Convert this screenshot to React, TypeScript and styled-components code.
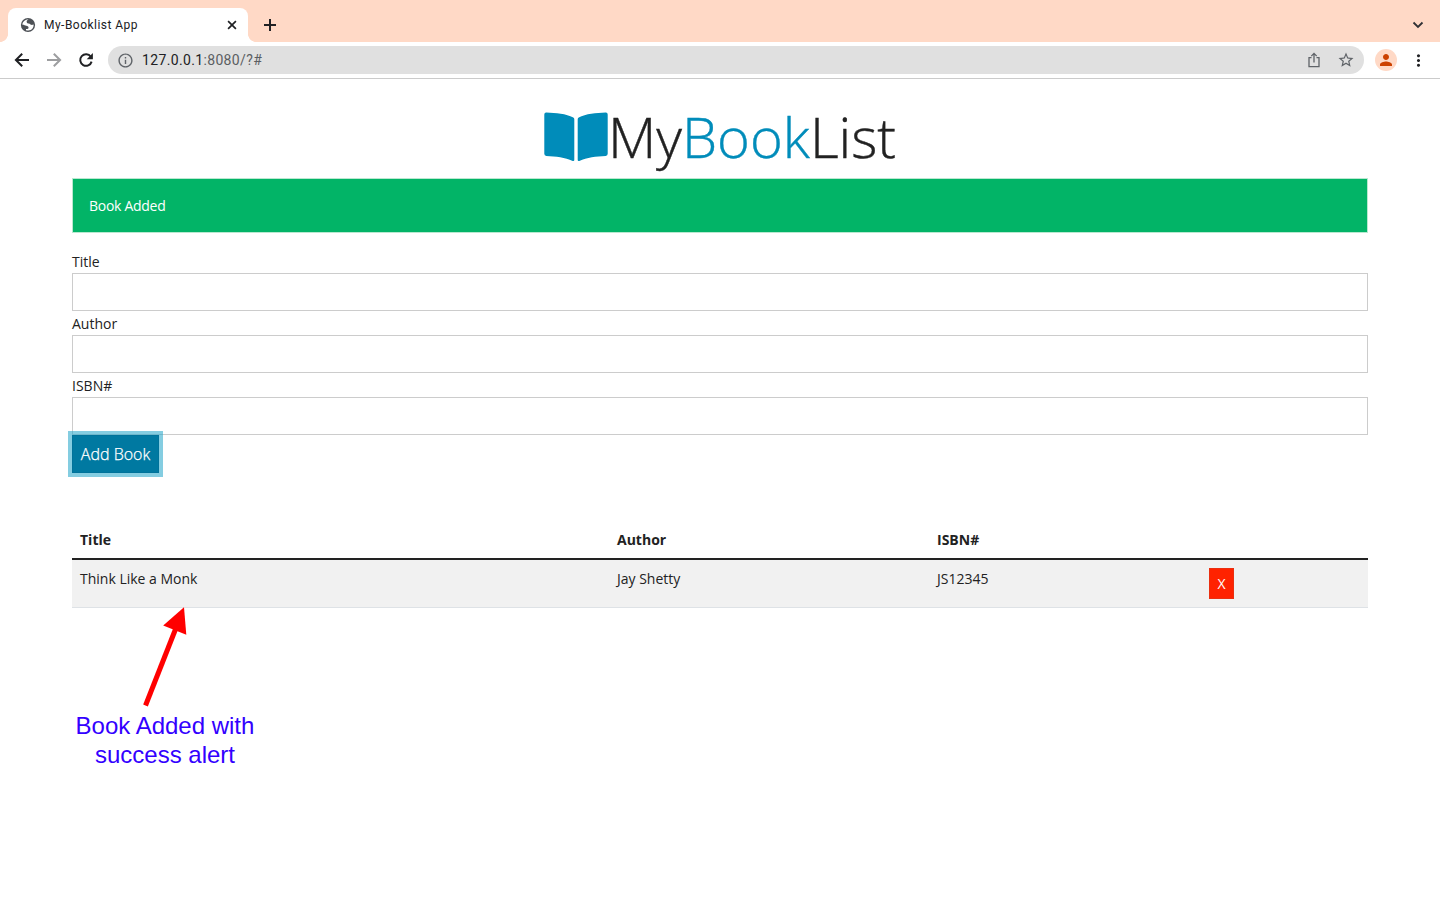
import React from "react";
import styled, { createGlobalStyle } from "styled-components";
import {
  MdOutlineInfo,
  MdStarBorder,
  MdPerson,
  MdMoreVert,
} from "react-icons/md";

const GlobalStyle = createGlobalStyle`
  *, *::before, *::after { box-sizing: border-box; }
  body {
    margin: 0;
    background: #fff;
    color: #222;
    font: 400 14px/21px "Open Sans", sans-serif;
    overflow: hidden;
  }
`;

const Window = styled.div`
  height: 900px;
  display: flex;
  flex-direction: column;
`;

const TabStrip = styled.div`
  height: 42px;
  padding: 8px 16px 0 8px;
  display: flex;
  background: #ffd9c6;
  color: #202124;
  font-family: Roboto, sans-serif;
`;

const Tab = styled.div`
  position: relative;
  width: 240px;
  height: 34px;
  padding: 0 9px 0 12px;
  display: flex;
  align-items: center;
  border-radius: 8px 8px 0 0;
  background: #fff;

  &::before,
  &::after {
    content: "";
    position: absolute;
    bottom: 0;
    width: 8px;
    height: 8px;
  }
  &::before {
    left: -8px;
    background: radial-gradient(circle at 0 0, transparent 7.6px, #fff 8.2px);
  }
  &::after {
    right: -8px;
    background: radial-gradient(circle at 100% 0, transparent 7.6px, #fff 8.2px);
  }
`;

const TabTitle = styled.span`
  flex: 1;
  margin-left: 8px;
  font-size: 12px;
  letter-spacing: 0.47px;
`;

const StripIcon = styled.span<{ $gap?: string }>`
  display: flex;
  align-items: center;
  height: 34px;
  margin-left: ${(p) => p.$gap ?? "0"};
`;

const Toolbar = styled.div`
  height: 37px;
  padding: 0 12px 0 12px;
  display: flex;
  align-items: center;
  border-bottom: 1px solid #cbcbcb;
  background: #fff;
  color: #202124;
`;

const NavButton = styled.span<{ $disabled?: boolean }>`
  width: 32px;
  display: flex;
  color: ${(p) => (p.$disabled ? "#9d9ea0" : "#202124")};
`;

const AddressBar = styled.div`
  width: 1256px;
  height: 28px;
  padding: 0 9px;
  display: flex;
  align-items: center;
  border-radius: 14px;
  background: #e0e0e0;
  color: #5f6368;
`;

const Url = styled.span`
  flex: 1;
  margin-left: 8px;
  font: 400 14px/20px Roboto, sans-serif;
  letter-spacing: 0.35px;
  color: #5b5e62;

  b {
    font-weight: 400;
    color: #202124;
  }
`;

const AddressIcon = styled.span`
  display: flex;
  margin-left: 15px;
`;

const Avatar = styled.span`
  width: 22px;
  height: 22px;
  margin: 0 12px 0 11px;
  display: flex;
  align-items: center;
  justify-content: center;
  border-radius: 50%;
  background: #ffd9c6;
  color: #cc4100;
`;

const Page = styled.main`
  position: relative;
  flex: 1;
  padding: 24px 72px 0;
`;

const Brand = styled.h1`
  height: 67px;
  margin: 0 0 8px;
  display: flex;
  justify-content: center;
  font-size: 56px;
  font-weight: 300;
  line-height: 67px;
  -webkit-text-stroke: 0.4px currentColor;

  svg {
    flex: none;
    margin: 8px 0 0;
    color: #008cba;
  }
`;

const Accent = styled.span`
  color: #008cba;
`;

const Alert = styled.div`
  height: 55px;
  padding: 16px;
  margin-bottom: 16px;
  border: 1px solid #b9e8d0;
  background: #02b467;
  color: #fff;
  letter-spacing: -0.28px;
`;

const Field = styled.label`
  display: block;
`;

const FieldName = styled.span`
  display: block;
  height: 24px;
  padding-top: 2px;
  line-height: 22px;
`;

const Input = styled.input`
  display: block;
  width: 100%;
  height: 38px;
  padding: 8px 12px;
  border: 1px solid #ccc;
  border-radius: 0;
  background: #fff;
`;

const SubmitButton = styled.button`
  position: relative;
  width: 87px;
  height: 38px;
  padding: 0;
  display: block;
  border: 1px solid #00729a;
  background: #0079a1;
  color: #fff;
  font: 300 16px/24px "Open Sans", sans-serif;
  -webkit-text-stroke: 0.25px currentColor;
  box-shadow: 0 0 0 4px rgba(38, 167, 202, 0.57);
`;

const Table = styled.table`
  width: 100%;
  margin-top: 48px;
  border-collapse: separate;
  border-spacing: 0;
  table-layout: fixed;
`;

const Column = styled.col<{ $width: number }>`
  width: ${(p) => p.$width}px;
`;

const HeadCell = styled.th`
  height: 39px;
  padding: 8px;
  border-bottom: 2px solid #222;
  text-align: left;
  font-weight: 700;
`;

const Cell = styled.td`
  height: 48px;
  padding: 8px;
  border-bottom: 1px solid #dee2e6;
  background: #f1f1f1;
  vertical-align: top;
`;

const DeleteButton = styled.button`
  display: block;
  width: 25px;
  height: 31px;
  padding: 0;
  border: 1px solid #ea2f10;
  background: #ff2200;
  color: #fff;
  font: 400 14px/21px "Open Sans", sans-serif;
`;

const Note = styled.div`
  position: absolute;
  left: 65px;
  top: 528px;
  width: 200px;
  color: #3300ff;
  font: 400 24px/29px "Liberation Sans", sans-serif;
  text-align: center;

  svg {
    display: block;
  }
`;

const NoteText = styled.div`
  margin-top: 4px;
`;

const books = [{ title: "Think Like a Monk", author: "Jay Shetty", isbn: "JS12345" }];

const LineIcon = ({ size, d, width = 2 }: { size: number; d: string; width?: number }) => (
  <svg
    width={size}
    height={size}
    viewBox={`0 0 ${size} ${size}`}
    fill="none"
    stroke="currentColor"
    strokeWidth={width}
  >
    <path d={d} />
  </svg>
);

const ReloadIcon = () => (
  <svg width="20" height="20" viewBox="0 0 20 20">
    <path d="M14.800 6.700A5.800 5.800 0 1 0 15.600 11.600" fill="none" stroke="currentColor" strokeWidth="2" />
    <path d="M16.900 3v6.200h-6.200Z" fill="currentColor" />
  </svg>
);

const GlobeIcon = () => (
  <svg width="16" height="16" viewBox="0 0 16 16">
    <circle cx="8" cy="8" r="7.100" fill="#4d5156" />
    <path
      d="M8.600 2.600C7.100 3 6.500 3.900 6.700 4.900c.2 1 1.100 1.500 2.200 1.700 1 .2 1.300.9 2.100 1.200.8.200 1.700 0 2.600-.2.300 3.100-2 5.900-5.200 6-.9 0-1.700-.1-2.400-.4V12c1.400.2 2.300-.2 2.500-1.100.3-1.300-.8-2-2.200-2.200-1.400-.2-2-.9-3.900-.9C2.300 5.100 4.900 2.400 8.600 2.600Z"
      fill="#fff"
    />
  </svg>
);

const BookIcon = () => (
  <svg width="64" height="52" viewBox="0 0 64 52" fill="currentColor">
    <path d="M2.300 1.500C12 1.800 22 2.800 29.300 6.500Q30.300 7 30.300 8.200V48.800Q30.300 50.500 28.700 49.900C21 46.200 12 45.500 2.300 44.900Q.3 44.700.3 42.700V3.500Q.3 1.400 2.300 1.500Z" />
    <path d="M61.700 1.500C52 1.800 42 2.800 34.700 6.500Q33.700 7 33.700 8.200V48.800Q33.700 50.500 35.300 49.900C43 46.200 52 45.500 61.700 44.900Q63.700 44.700 63.700 42.700V3.500Q63.700 1.400 61.700 1.500Z" />
  </svg>
);

export default function App() {
  return (
    <Window>
      <GlobalStyle />
      <TabStrip>
        <Tab>
          <GlobeIcon />
          <TabTitle>My-Booklist App</TabTitle>
          <LineIcon size={14} d="M3.100 3.100l7.800 7.800M10.900 3.100l-7.800 7.800" width={1.700} />
        </Tab>
        <StripIcon $gap="12px">
          <LineIcon size={20} d="M10 4v12M4 10h12" />
        </StripIcon>
        <StripIcon $gap="auto">
          <svg width="12" height="8" viewBox="0 0 12 8" fill="none" stroke="#303134" strokeWidth="1.8">
            <path d="M1.500 1.500 6 6l4.500-4.500" />
          </svg>
        </StripIcon>
      </TabStrip>
      <Toolbar>
        <NavButton><LineIcon size={20} d="M17 10H4.500M10.200 3.700 3.900 10l6.300 6.300" /></NavButton>
        <NavButton $disabled><LineIcon size={20} d="M3 10h12.500M9.800 3.700l6.300 6.300-6.300 6.300" /></NavButton>
        <NavButton><ReloadIcon /></NavButton>
        <AddressBar>
          <MdOutlineInfo size={17} />
          <Url><b>127.0.0.1</b>:8080/?#</Url>
          <AddressIcon>
            <svg width="16" height="16" viewBox="0 0 16 16" fill="none" stroke="currentColor" strokeWidth="1.300">
              <path d="M5.500 5.700H3v8.900h10V5.700h-2.500M8 10.500V1.500M5.300 4.100 8 1.400l2.700 2.700" />
            </svg>
          </AddressIcon>
          <AddressIcon><MdStarBorder size={18} /></AddressIcon>
        </AddressBar>
        <Avatar><MdPerson size={18} /></Avatar>
        <MdMoreVert size={19} />
      </Toolbar>
      <Page>
        <Brand>
          <BookIcon />
          <span>My<Accent>Book</Accent>List</span>
        </Brand>
        <Alert>Book Added</Alert>
        <Field><FieldName>Title</FieldName><Input /></Field>
        <Field><FieldName>Author</FieldName><Input /></Field>
        <Field><FieldName>ISBN#</FieldName><Input /></Field>
        <SubmitButton>Add Book</SubmitButton>
        <Table>
          <colgroup>
            <Column $width={537} />
            <Column $width={320} />
            <Column $width={272} />
            <Column $width={167} />
          </colgroup>
          <thead>
            <tr>
              <HeadCell>Title</HeadCell>
              <HeadCell>Author</HeadCell>
              <HeadCell>ISBN#</HeadCell>
              <HeadCell />
            </tr>
          </thead>
          <tbody>
            {books.map((book) => (
              <tr key={book.isbn}>
                <Cell>{book.title}</Cell>
                <Cell>{book.author}</Cell>
                <Cell>{book.isbn}</Cell>
                <Cell><DeleteButton>X</DeleteButton></Cell>
              </tr>
            ))}
          </tbody>
        </Table>
        <Note>
          <svg width="200" height="100" viewBox="65 607 200 100">
            <path d="M145.500 705.500 176 628" stroke="#f00" strokeWidth="5" />
            <path d="M184 607.300 186.300 634.700 163.200 625.500Z" fill="#f00" />
          </svg>
          <NoteText>Book Added with<br />success alert</NoteText>
        </Note>
      </Page>
    </Window>
  );
}
